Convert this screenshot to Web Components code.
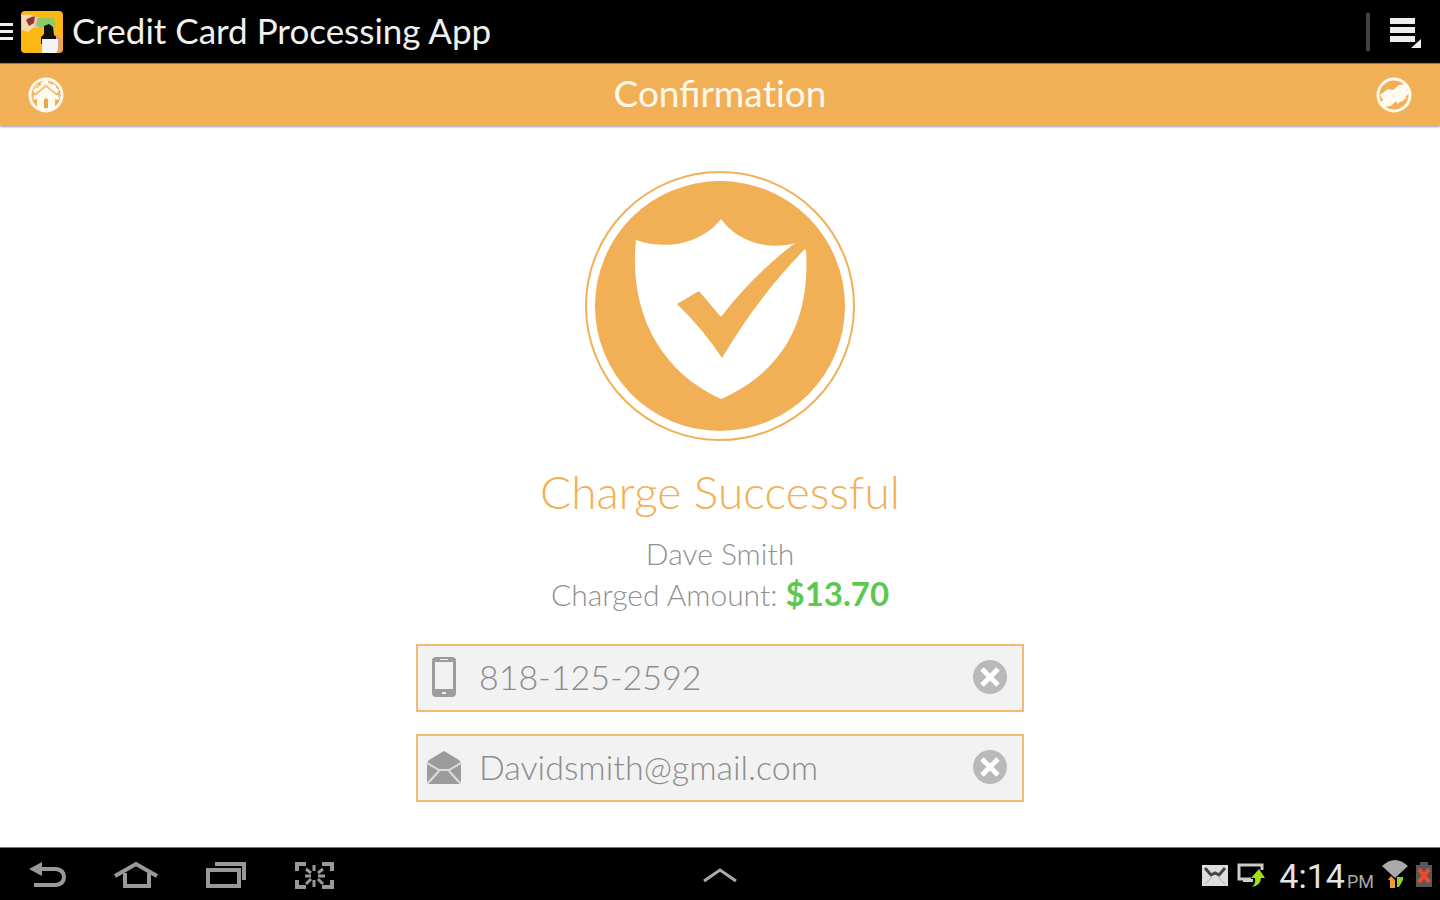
<!DOCTYPE html>
<html lang="en">
<head>
<meta charset="utf-8">
<meta name="viewport" content="width=device-width, initial-scale=1">
<title>Credit Card Processing App</title>
<style>
  html, body { margin: 0; }
  body { font-family: Lato, "Liberation Sans", sans-serif; background: #fff; }
</style>
</head>
<body>
<payment-screen>
  <app-bar slot="bar">Credit Card Processing App</app-bar>
  <section-bar slot="heading">Confirma<span>tion</span></section-bar>
  <success-badge></success-badge>
  <charge-summary>
    <span slot="status">Charge Successful</span>
    <span slot="name">Dave Smith</span>
    <span slot="label">Charged Amount:</span>
    <span slot="amount">$13.70</span>
  </charge-summary>
  <contact-form></contact-form>
  <system-bar slot="system"></system-bar>
</payment-screen>

<script>
const BASE = `<style>
  *, *::before, *::after { box-sizing: border-box; }
  svg { display: block; flex: none; }
  button { appearance: none; border: 0; background: none; margin: 0; padding: 0; font: inherit; color: inherit; cursor: pointer; display: block; flex: none; }
</style>`;

function define(name, markup, setup) {
  const template = document.createElement('template');
  template.innerHTML = BASE + markup;
  customElements.define(name, class extends HTMLElement {
    constructor() {
      super();
      this.attachShadow({ mode: 'open' }).append(template.content.cloneNode(true));
    }
    connectedCallback() { if (setup) setup(this, this.shadowRoot); }
  });
}

define('payment-screen', `
  <style>
    :host { display: grid; grid-template-rows: auto auto 1fr auto; min-height: 100vh; --accent: #f2b056; }
    main { display: flex; flex-direction: column; align-items: center; padding: 44px 16px; }
  </style>
  <slot name="bar"></slot>
  <slot name="heading"></slot>
  <main><slot></slot></main>
  <slot name="system"></slot>
`);

define('app-bar', `
  <style>
    :host { display: block; background: #000; color: #f0f0f0; }
    header { display: flex; align-items: center; height: 63px; padding-right: 18px; }
    h1 { flex: 1; margin: 0 0 0 8px; padding-bottom: 4px; font-size: 35px; line-height: 40px; font-weight: 400; }
    .rule { width: 4px; height: 38px; background: #444; margin-right: 20px; }
    .more { padding-top: 2px; }
  </style>
  <header>
    <button aria-label="Open drawer">
      <svg width="20" height="24" viewBox="0 0 20 24" fill="#eee"><path d="M0 3h13v3H0zM0 10h13v3H0zM0 17h13v3H0z"/></svg>
    </button>
    <svg width="44" height="44" viewBox="0 0 44 44" role="img" aria-label="App logo">
      <defs><clipPath id="c"><rect x="1" y="1" width="42" height="42" rx="4"/></clipPath></defs>
      <g clip-path="url(#c)">
        <path fill="#fdb713" d="M0 0h44v44H0z"/>
        <path fill="#f6d9b0" d="M1 5Q12 3 18 8l4 8-9 2-5 4-6-2z"/>
        <path fill="#8f3a28" d="M6 10q6-5 11-3l-3 6-5 3z"/>
        <path fill="#edc3ad" d="M15 6l8 4-2 7-8 1z"/>
        <path fill="#8ccb66" d="M18 8h16l2 10H20l-4-3z"/>
        <path fill="#111" d="M24 16l5-2 4 3 1 8 4 3v6H21v-7l3-3z"/>
        <path fill="#e4a078" d="M36 24l6 4v14h-6z"/>
        <path fill="#f5f4f2" d="M22 29h16v11l-2 3H22z"/>
      </g>
    </svg>
    <h1><slot></slot></h1>
    <div class="rule"></div>
    <button class="more" aria-label="More options">
      <svg width="32" height="34" viewBox="0 0 32 34" fill="#eee"><path d="M0 2h25v6H0zM0 11h25v6H0zM0 20h25v6H0zM31 23v9H21z"/></svg>
    </button>
  </header>
`);

define('section-bar', `
  <style>
    :host { display: block; background: var(--accent); color: #fff8ea; border-top: 1px solid #a87733; box-shadow: 0 1px 2px #9a9fae; }
    header { display: grid; grid-template-columns: 36px 1fr 36px; align-items: center; height: 62px; padding: 0 28px; }
    h2 { margin: 0; text-align: center; font-size: 37px; line-height: 40px; font-weight: 400; padding-bottom: 4px; }
    ::slotted(span) { font-variant-ligatures: none; }
  </style>
  <header>
    <button aria-label="Home">
      <svg width="36" height="36" viewBox="0 0 36 36" fill="none">
        <circle cx="18" cy="18" r="16" stroke="#fff9ed" stroke-width="3"/>
        <path fill="#fffaf0" d="M18 7L4 20l2 3 3-1v9q9 5 18 0v-9l3 1 2-3z"/>
        <path stroke="#fff9ed" stroke-width="4" d="M6 15L18 4l12 11M8 9l4 3M27 8l-4 4"/>
        <path stroke="#edb76e" stroke-width="1.5" d="M7 18L18 9l11 9M8 11l5-4M20 5l5 2M31 14v6M5 15v6"/>
        <path fill="#e7a64a" d="M16 31v-8q2-4 4 0v8z"/>
      </svg>
    </button>
    <h2><slot></slot></h2>
    <button aria-label="New charge">
      <svg width="36" height="36" viewBox="0 0 36 36" fill="none">
        <circle cx="18" cy="18" r="16" stroke="#fff9ed" stroke-width="3"/>
        <path fill="#fffaf0" d="M4 18l8-6 5 1 6-5 8-1v5l3 4-5 4-2 4-8 1-4 4-8 1 2-4-6 1 4-4z"/>
        <path stroke="#fff9ed" stroke-width="2" d="M6 28l9-4M21 26l9-6"/>
      </svg>
    </button>
  </header>
`);

define('success-badge', `
  <style>:host { display: block; }</style>
  <svg width="272" height="272" viewBox="0 0 272 272" role="img" aria-label="Payment approved">
    <circle cx="136" cy="136" r="134" fill="#fff" stroke="#f2b056" stroke-width="2"/>
    <circle cx="136" cy="136" r="125" fill="#f2b056"/>
    <path fill="#fff" d="M137 49C153 71 183 81 212 73L222 80C226 145 204 199 137 229C72 199 45 137 52 70C84 81 118 73 137 49Z"/>
    <path fill="#f2b056" d="M93 134L115 121L137 147C158 119 184 93 214 71L222 78C190 110 162 148 138 188Q119 159 93 134Z"/>
  </svg>
`);

define('charge-summary', `
  <style>
    :host { display: flex; flex-direction: column; align-items: center; text-align: center; color: #909090; font-size: 30px; line-height: 40px; font-weight: 300; }
    h3 { margin: 18px 0 9px; font-size: 46px; line-height: 64px; font-weight: 300; color: var(--accent); }
    p { margin: 0; }
    strong { font-size: 33px; font-weight: 700; color: #5bc950; }
  </style>
  <h3><slot name="status"></slot></h3>
  <p><slot name="name"></slot></p>
  <p><slot name="label"></slot> <strong><slot name="amount"></slot></strong></p>
`);

define('contact-form', `
  <style>
    :host { display: block; width: 100%; max-width: 608px; margin-top: 30px; }
    form { display: grid; gap: 22px; }
  </style>
  <form>
    <contact-field label="Phone number" type="tel" value="818-125-2592">
      <svg width="36" height="40" viewBox="0 0 36 40">
        <rect x="6" y="0" width="24" height="40" rx="4" fill="#9c9c9c"/>
        <path fill="#f1f1f1" d="M9 5h18v27H9zM14 2h8v1h-8zM16 35h4v2h-4z"/>
      </svg>
    </contact-field>
    <contact-field label="Email address" type="email" value="Davidsmith@gmail.com">
      <svg width="36" height="40" viewBox="0 0 36 40">
        <path fill="#9c9c9c" d="M1 17Q1 15 3 13L18 4l15 9q2 2 2 4v17q0 3-3 3H4q-3 0-3-3z"/>
        <path fill="none" stroke="#dedede" stroke-width="2" d="M1 16l12 7h10l12-7M2 36l11-12M34 36L23 24"/>
      </svg>
    </contact-field>
  </form>
`);

define('contact-field', `
  <style>
    :host { display: block; }
    div { display: flex; align-items: center; height: 68px; padding: 0 14px 2px 8px; background: #f2f2f2; border: 2px solid #f1bb72; }
    label { flex: none; width: 36px; }
    input { flex: 1; min-width: 0; height: 48px; margin: 0; padding: 0 16px 2px 17px; border: 0; outline: 0; background: none; font: 300 34px/46px Lato, "Liberation Sans", sans-serif; color: #8c8c8c; }
  </style>
  <div>
    <label for="field"><slot></slot></label>
    <input id="field">
    <button type="button" aria-label="Clear">
      <svg width="36" height="36" viewBox="0 0 36 36"><circle cx="18" cy="18" r="17" fill="#b9b9b9"/><path stroke="#fff" stroke-width="5" d="M10 10l16 16M26 10L10 26"/></svg>
    </button>
  </div>
`, (host, root) => {
  const input = root.querySelector('input');
  input.type = host.getAttribute('type');
  input.value = host.getAttribute('value');
  input.setAttribute('aria-label', host.getAttribute('label'));
  root.querySelector('button').addEventListener('click', () => { input.value = ''; input.focus(); });
});

define('system-bar', `
  <style>
    :host { display: block; background: #000; border-top: 1px solid #777; color: #e4e4e4; }
    footer { display: grid; grid-template-columns: 1fr auto 1fr; align-items: center; height: 52px; }
    nav { display: flex; align-items: center; gap: 46px; padding-left: 28px; }
    .tray { display: flex; align-items: center; justify-content: flex-end; gap: 8px; padding-right: 8px; }
    time { display: flex; align-items: baseline; gap: 2px; margin-left: 6px; padding-top: 8px; font: 400 34px/40px Roboto, sans-serif; }
    small { font-size: 18px; color: #aaa; }
  </style>
  <footer>
    <nav aria-label="System">
      <button aria-label="Back"><svg width="40" height="32" viewBox="0 0 40 32"><path fill="none" stroke="#999" stroke-width="4" d="M10 10h18q8 1 8 8t-8 8H6"/><path fill="#999" d="M1 10L14 3v14z"/></svg></button>
      <button aria-label="Home"><svg width="46" height="32" viewBox="0 0 46 32" fill="none" stroke="#999" stroke-width="4"><path d="M1 17L22 5l21 12M11 14v13h24V14"/></svg></button>
      <button aria-label="Recent apps"><svg width="42" height="32" viewBox="0 0 42 32" fill="none" stroke="#999" stroke-width="4"><path d="M2 11h31v16H2zM9 5h29v16" /></svg></button>
      <button aria-label="Screenshot"><svg width="42" height="32" viewBox="0 0 42 32" fill="none" stroke="#999"><path stroke-width="4" d="M3 12V5h9M28 5h10v7M38 21v7H28M12 28H3v-7"/><path stroke-width="3" d="M20 6v6M20 21v7M11 17h6M24 17h7M12 10l5 4M29 10l-5 4M12 25l5-5M29 25l-5-5"/></svg></button>
    </nav>
    <button aria-label="Show apps"><svg width="36" height="18" viewBox="0 0 36 18" fill="none" stroke="#aaa" stroke-width="3"><path d="M2 15L18 4l16 11"/></svg></button>
    <div class="tray">
      <svg width="28" height="32" viewBox="0 0 28 32" role="img" aria-label="Mail"><rect x="1" y="6" width="26" height="21" fill="#ddd"/><path fill="none" stroke="#444" stroke-width="3" d="M4 9l6 7 4-2 4 2 6-7"/><path fill="none" stroke="#aaa" d="M4 25l7-7M24 25l-7-7"/></svg>
      <svg width="28" height="32" viewBox="0 0 28 32" role="img" aria-label="Screen sharing"><path fill="none" stroke="#ccc" stroke-width="3" d="M14 20H2V6h23v5"/><path fill="#ccc" d="M6 20h10v3H6z"/><path fill="#a2df16" d="M22 10l6 9h-4q0 7-9 9 4-3 3-9h-4z"/></svg>
      <time datetime="16:14">4:14<small>PM</small></time>
      <svg width="26" height="32" viewBox="0 0 26 32" role="img" aria-label="Wi-Fi"><path fill="#aaa" d="M0 7Q13-5 26 7L13 19z"/><path fill="#ee9c3b" d="M9 17l4 4v8H8v-8H6z"/><path fill="#93cf2b" d="M15 18h6v3l-4 7h-2z"/></svg>
      <svg width="16" height="32" viewBox="0 0 16 32" role="img" aria-label="Battery low"><path fill="#585858" d="M4 3h8v3h4v22H0V6h4z"/><path stroke="#f04a2c" stroke-width="4" d="M3 10l10 13M13 10L3 23"/></svg>
    </div>
  </footer>
`);
</script>
</body>
</html>
